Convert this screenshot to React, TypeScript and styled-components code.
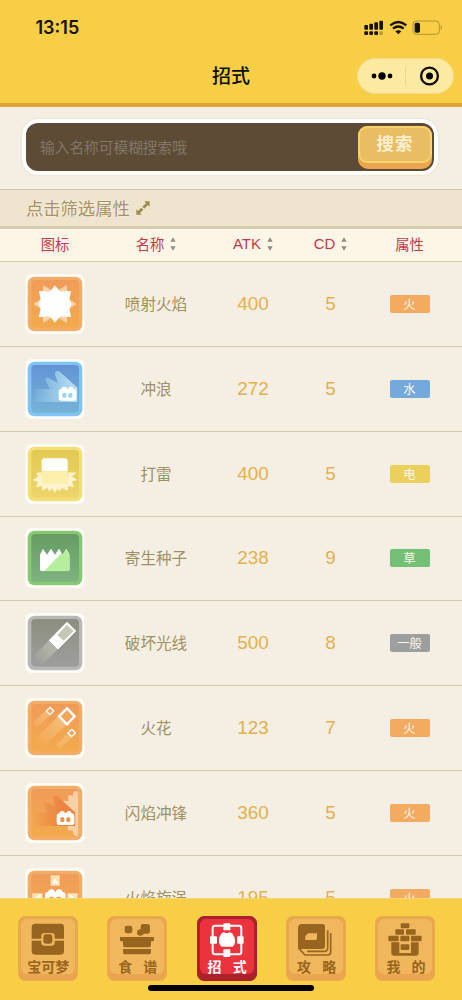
import React from "react";
import styled, { createGlobalStyle } from "styled-components";

const cjk = `"Noto Sans CJK SC", sans-serif`;

const GlobalStyle = createGlobalStyle`
  *, *::before, *::after { box-sizing: border-box; }
  body { margin: 0; background: #f4efe2; font-family: Inter, ${cjk}; }
  svg { display: block; flex: none; }
`;

const Screen = styled.div`
  position: relative;
  display: flex;
  flex-direction: column;
  width: 462px;
  height: 1000px;
  overflow: hidden;
  background: #f4efe2;
`;

const Header = styled.header`
  flex: none;
  height: 107px;
  background: #f8ce46;
  border-bottom: 4px solid #dba53b;
`;

const StatusBar = styled.div`
  display: flex;
  align-items: center;
  justify-content: space-between;
  height: 56px;
  padding: 0 19px 0 35.5px;
`;

const Clock = styled.time`
  font-size: 18px;
  font-weight: 600;
  line-height: 20px;
  color: #151204;
`;

const TitleBar = styled.div`
  display: grid;
  grid-template-columns: 1fr auto 1fr;
  align-items: center;
  height: 40px;
  padding: 0 8px;
`;

const Title = styled.h1`
  grid-column: 2;
  margin: 0;
  padding-bottom: 2px;
  font: 500 19px/28px ${cjk};
  color: #0d0b03;
`;

const Capsule = styled.div`
  justify-self: end;
  display: flex;
  align-items: center;
  width: 97px;
  height: 36px;
  border: 1px solid #f1dc8d;
  border-radius: 18px;
  background: #fceaa3;
`;

const SearchArea = styled.section`
  flex: none;
  height: 82px;
  padding: 12px 24px 0 22px;
`;

const SearchBox = styled.div`
  display: flex;
  align-items: flex-start;
  justify-content: space-between;
  height: 56px;
  padding: 3px 2px 0 14px;
  border: 4px solid #fff;
  border-radius: 16px;
  background: #5d4b35;
  box-shadow: 0 0 2px #d9d2bd;
`;

const Placeholder = styled.span`
  font: 400 14.7px/42px ${cjk};
  color: #817768;
`;

const SearchButton = styled.button`
  width: 74px;
  height: 43px;
  padding: 0;
  border: 0;
  border-bottom: 6px solid #eba650;
  border-radius: 10px;
  background: #eba650;
`;

const SearchFace = styled.span`
  display: block;
  height: 37px;
  border: 2px solid #f7d36c;
  border-radius: 9px;
  background: #e9bd61;
  font: 700 17.5px/30px ${cjk};
  letter-spacing: 1px;
  color: #fbf0d2;
`;

const FilterBar = styled.div`
  flex: none;
  display: flex;
  align-items: center;
  gap: 6px;
  height: 40px;
  padding: 0 0 1px 26px;
  border-top: 1px solid #d3c8a6;
  border-bottom: 3px solid #d6ccad;
  background: #efe4ce;
  font: 400 17.3px/28px ${cjk};
  color: #a49363;
  text-shadow: 0 0 2px #fffaf0;
`;

const columns = "110px 92px 102px 53px 105px";

const TableHead = styled.div`
  flex: none;
  display: grid;
  grid-template-columns: ${columns};
  height: 33px;
  border-bottom: 1px solid #d3caa9;
  background: #fdf6e7;
`;

const HeadCell = styled.div`
  display: flex;
  align-items: center;
  justify-content: center;
  gap: 6px;
  padding-bottom: 3px;
  font: 400 14.3px/20px ${cjk};
  color: #bd3b4c;
`;

const Latin = styled.span`
  font: 400 15px/20px "Liberation Sans", sans-serif;
`;

const List = styled.main`
  flex: 1;
  min-height: 0;
  overflow: hidden;
`;

const Row = styled.div`
  display: grid;
  grid-template-columns: ${columns};
  align-items: center;
  justify-items: center;
  height: 84.85px;
  border-bottom: 1px solid #d2caaa;
`;

const MoveName = styled.span`
  padding-bottom: 2px;
  font: 400 15.6px/22px ${cjk};
  color: #9f9163;
`;

const Value = styled.span`
  font: 400 18.9px/22px "Liberation Sans", sans-serif;
  color: #e5b04e;
`;

const Tag = styled.span<{ $color: string }>`
  width: 40px;
  height: 18px;
  border-radius: 2px;
  background: ${(p) => p.$color};
  color: #fff7e8;
  font: 400 12.3px/18px ${cjk};
  text-align: center;
`;

const Nav = styled.nav`
  flex: none;
  display: flex;
  justify-content: space-between;
  height: 102px;
  padding: 18px 26.5px 0 17.8px;
  border-top: 1px solid #f4d775;
  background: #f8ce46;
`;

const NavButton = styled.button<{ $active?: boolean }>`
  width: 60px;
  height: 65px;
  margin: -1px 0 0;
  padding: 2px 2px 7px;
  border: 1px solid ${(p) => (p.$active ? "#a91f29" : "#e7b047")};
  border-radius: 7px;
  background: ${(p) => (p.$active ? "#ab222c" : "#eba551")};
  color: ${(p) => (p.$active ? "#fff" : "#97651f")};
`;

const NavFace = styled.span<{ $active?: boolean }>`
  display: flex;
  flex-direction: column;
  align-items: center;
  height: 55px;
  padding-top: 4px;
  border-radius: 6px;
  background: ${(p) => (p.$active ? "#eb333e" : "#f1b75c")};
`;

const NavLabel = styled.span`
  padding-left: 1px;
  font: 700 14px/18px ${cjk};
  word-spacing: 8px;
  white-space: nowrap;
`;

const HomeIndicator = styled.div`
  position: absolute;
  left: 148px;
  bottom: 9px;
  width: 166px;
  height: 6px;
  border-radius: 3px;
  background: #000;
`;

const StatusIcons = () => (
  <svg width="79" height="16" viewBox="402 60 237 48">
    <g fill="#151204">
      <rect x="403" y="75" width="11" height="14" rx="3" />
      <rect x="418" y="71" width="11" height="18" rx="3" />
      <rect x="433" y="67" width="11" height="22" rx="3" />
      <rect x="448" y="62" width="11" height="27" rx="3" />
      <rect x="403" y="94" width="11" height="11" rx="3" />
      <rect x="418" y="94" width="11" height="11" rx="3" />
      <rect x="433" y="94" width="11" height="11" rx="3" />
      <rect x="448" y="94" width="11" height="11" rx="3" opacity=".25" />
    </g>
    <path d="M481 76Q505 56 529 76M489 86Q505 73 521 86" fill="none" stroke="#151204" strokeWidth="7" />
    <path d="M496 94Q505 88 514 94L505 103Z" fill="#151204" />
    <rect x="549" y="63" width="79" height="40" rx="11" fill="none" stroke="#b39435" strokeWidth="3" />
    <rect x="554" y="68" width="16" height="30" rx="5" fill="#151204" />
    <path d="M632 75Q640 83 632 91Z" fill="#b39435" />
  </svg>
);

const CapsuleIcons = () => (
  <svg width="95" height="34" viewBox="0 0 95 34">
    <circle cx="16" cy="17" r="2.4" />
    <circle cx="24" cy="17" r="3.7" />
    <circle cx="32" cy="17" r="2.4" />
    <path d="M47.5 6.5v21" stroke="#e9d997" />
    <circle cx="71.5" cy="17" r="8.4" fill="none" stroke="#0d0b03" strokeWidth="2.3" />
    <circle cx="71.5" cy="17" r="3.5" />
  </svg>
);

const ExpandIcon = () => (
  <svg width="14" height="14" viewBox="0 0 42 42" fill="#a08b4e">
    <path d="M25 1H41V17L36 12 25 23 19 17 30 6ZM17 41H1V25L6 30 16 20 22 26 12 36Z" />
  </svg>
);

const SortIcon = () => (
  <svg width="6" height="14" viewBox="0 0 18 42" fill="#8f8c87">
    <path d="M9 1L17 14H1ZM9 41L1 28H17Z" />
  </svg>
);

const themes = {
  fire: { edge: "#f2ae68", top: "#f09c59", bottom: "#f2aa4c", tag: "#f2ab61", label: "火" },
  water: { edge: "#80c4f2", top: "#6393d5", bottom: "#76b3d6", tag: "#74aadb", label: "水" },
  electric: { edge: "#f4de76", top: "#e3c953", bottom: "#edd46b", tag: "#ebd05c", label: "电" },
  grass: { edge: "#87c873", top: "#679b63", bottom: "#7eb381", tag: "#73bf75", label: "草" },
  normal: { edge: "#b7b8b7", top: "#8c8e7e", bottom: "#9e9f9e", tag: "#9d9f9f", label: "一般" },
};
type Kind = keyof typeof themes;

const Critter = ({ x, y, eye }: { x: number; y: number; eye: string }) => (
  <g transform={`translate(${x} ${y})`}>
    <path d="M0 15Q0 7 8 7Q9 0 16 0Q24 0 25 6H28Q29 0 37 0Q44 0 45 7Q53 7 53 15V35Q53 42 45 42H8Q0 42 0 35Z" fill="#fff" />
    <rect x="11" y="19" width="12" height="14" rx="4" fill={eye} />
    <rect x="29" y="19" width="12" height="14" rx="4" fill={eye} />
  </g>
);

const FlameBurst = () => (
  <>
    <path d="M27 90L51 74 56 35 74 46 90 60 106 46 124 35 129 74 153 90 129 106 124 145 106 134 90 120 74 134 56 145 51 106Z" fill="#f9d3ab" stroke="#f9d3ab" strokeWidth="2" strokeLinejoin="round" />
    <path d="M90 37L105 55 136 53 131 75 137 90 131 105 136 127 105 125 90 143 75 125 44 127 49 105 43 90 49 75 44 53 75 55Z" fill="#fff" stroke="#fff" strokeWidth="4" strokeLinejoin="round" />
  </>
);

const Surf = () => (
  <>
    <defs>
      <linearGradient id="surf" x1="24" x2="155" y1="0" y2="0" gradientUnits="userSpaceOnUse">
        <stop stopColor="#a9daf0" stopOpacity="0" />
        <stop offset=".5" stopColor="#9dccea" stopOpacity=".85" />
        <stop offset="1" stopColor="#b9e2f4" />
      </linearGradient>
    </defs>
    <path d="M24 90H74L62 63Q60 54 69 56L98 72 90 46Q90 32 103 37L157 86V129H24Z" fill="url(#surf)" />
    <Critter x={101} y={83} eye="#9ed5f0" />
  </>
);

const Thunder = () => (
  <>
    <path d="M35 87L50 86V98H130V86L153 87L139 97L155 108L139 112L146 128L128 125L127 139L111 131L102 141L96 132L90 145L82 132L73 141L67 130L53 139L51 125L34 128L40 114L25 108L40 98Z" fill="#fff4cf" stroke="#fff4cf" strokeWidth="2" strokeLinejoin="round" />
    <path d="M50 82H128V120H50Z" fill="#fbefab" />
    <path d="M50 82V52Q50 43 59 43H119Q128 43 128 52V82Z" fill="#fff" />
  </>
);

const LeechSeed = () => (
  <>
    <defs>
      <clipPath id="seed">
        <path d="M45 80L54 62 66 80 78 62 90 80 102 62 113 80 124 62 134 80V122Q134 130 126 130H53Q45 130 45 122Z" />
      </clipPath>
    </defs>
    <g clipPath="url(#seed)">
      <path d="M40 55H140V135H40Z" fill="#fff" />
      <path d="M52 135L116 69V55H140V135Z" fill="#b5ee9d" />
    </g>
  </>
);

const HyperBeam = () => (
  <>
    <defs>
      <linearGradient id="beam" x1="30" x2="88" y1="142" y2="82" gradientUnits="userSpaceOnUse">
        <stop stopColor="#c8cabd" stopOpacity="0" />
        <stop offset="1" stopColor="#b7b9a8" />
      </linearGradient>
    </defs>
    <path d="M20 134L73 82 99 108 48 158Z" fill="url(#beam)" />
    <path d="M73 82L126 28 152 54 99 108Z" fill="#fff" stroke="#fff" strokeWidth="3" strokeLinejoin="round" />
    <path d="M97 66L126 35 146 54 116 83Z" fill="#c6c8b6" />
  </>
);

const Ember = () => (
  <>
    <defs>
      <linearGradient id="ember" x1="30" x2="120" y1="140" y2="60" gradientUnits="userSpaceOnUse">
        <stop stopColor="#f7c274" stopOpacity="0" />
        <stop offset="1" stopColor="#f7be7e" />
      </linearGradient>
    </defs>
    <path d="M22 130L101 54 126 79 46 154ZM24 73L64 37 76 51 36 88ZM92 141L128 105 141 118 103 154Z" fill="url(#ember)" />
    <g fill="#f3a65b" stroke="#fff">
      <path d="M126 31L149 55 126 79 102 55Z" strokeWidth="7" />
      <path d="M75 28L86 39 75 50 64 39ZM140 94L151 105 140 116 129 105Z" strokeWidth="4" />
    </g>
  </>
);

const FlareBlitz = () => (
  <>
    <defs>
      <linearGradient id="blitz" x1="26" x2="105" y1="0" y2="0" gradientUnits="userSpaceOnUse">
        <stop stopColor="#ef8540" stopOpacity="0" />
        <stop offset="1" stopColor="#ed8540" />
      </linearGradient>
    </defs>
    <path d="M160 27L153 23 145 28 143 40 133 35 129 42 131 54 114 53 124 69 151 90V129H128L129 142 143 143 147 157 155 160 160 153Z" fill="#f8d0a4" />
    <path d="M24 89H66L56 64Q54 54 64 57L91 72 84 48Q84 33 97 39L150 88V129H24Z" fill="url(#blitz)" />
    <Critter x={95} y={84} eye="#f09245" />
  </>
);

const FireSpin = () => (
  <>
    <path d="M77 22H104V53H77ZM22 76H53V102H22ZM127 76H158V102H127Z" fill="#fbe1b4" />
    <path d="M90 31L100 47H80ZM30 90L47 77V102ZM150 90L133 77V102Z" fill="#fff" />
    <g transform="translate(-15 -26) scale(1.17)">
      <Critter x={64} y={77} eye="#f09b4b" />
    </g>
  </>
);

const MoveIcon = ({ kind, art }: { kind: Kind; art: React.ReactNode }) => {
  const t = themes[kind];
  return (
    <svg width="60" height="60" viewBox="0 0 180 180">
      <defs>
        <linearGradient id={`panel-${kind}`} x1="0" y1="0" x2="0" y2="1">
          <stop stopColor={t.top} />
          <stop offset="1" stopColor={t.bottom} />
        </linearGradient>
      </defs>
      <rect x="1.5" y="1" width="177" height="178" rx="17" fill="#fffefa" />
      <rect x="8" y="8" width="164" height="164" rx="21" fill={t.edge} />
      <rect x="19" y="18" width="143" height="143" rx="12" fill={`url(#panel-${kind})`} />
      {art}
    </svg>
  );
};

const BoxIcon = () => (
  <>
    <path d="M43 67V33Q43 22 54 22H130Q140 22 140 33V67H112V59Q112 50 103 50H81Q72 50 72 59V67ZM43 73H72V79Q72 88 81 88H103Q112 88 112 79V73H140V105Q140 115 130 115H54Q43 115 43 105Z" />
    <rect x="78" y="54" width="27" height="28" rx="7" />
  </>
);

const PotIcon = () => (
  <>
    <rect x="55" y="28" width="23" height="23" rx="7" />
    <path d="M103 31Q103 23 111 23H123Q131 23 131 31V44Q131 52 123 52H112Q110 58 102 58Q92 58 92 49Q92 39 103 39Z" />
    <path d="M41 62H143V72Q143 75 139 75H134V86Q134 93 127 93H58Q50 93 50 86V75H45Q41 75 41 71ZM50 98H134V109Q134 114 128 114H56Q50 114 50 109Z" />
  </>
);

const MovesIcon = () => (
  <>
    <rect x="49" y="28" width="86" height="86" rx="7" fill="none" stroke="#fff" strokeWidth="6" />
    <path d="M85 21H99Q102 21 102 24V40Q102 42 99 42H84Q81 42 81 40V24Q81 21 85 21ZM84 99H99Q102 99 102 102V119Q102 122 99 122H84Q81 122 81 119V102Q81 99 84 99ZM44 60H59Q62 60 62 63V79Q62 82 59 82H44Q41 82 41 79V63Q41 60 44 60ZM125 60H139Q142 60 142 63V79Q142 82 139 82H125Q122 82 122 79V63Q122 60 125 60Z" />
    <path d="M69 62Q73 58 74 53Q81 44 88 50H95Q103 44 109 53Q110 58 114 62Q120 82 109 91H76Q64 82 69 62Z" />
  </>
);

const BooksIcon = () => (
  <>
    <path fillRule="evenodd" d="M50 23H111Q119 23 119 31V90Q119 98 111 98H38V35Q38 23 50 23ZM69 51L60 59V71H90Q95 71 95 66V51Z" />
    <path d="M41 97L59 116H128Q136 116 136 108V50M65 105H118Q127 105 127 96V42" fill="none" stroke="currentColor" strokeWidth="5" />
  </>
);

const HouseIcon = () => (
  <>
    <rect x="79" y="21" width="26" height="15" rx="3" />
    <rect x="63" y="39" width="26" height="16" rx="3" />
    <rect x="95" y="39" width="29" height="16" rx="3" />
    <rect x="42" y="58" width="31" height="17" rx="3" />
    <rect x="78" y="58" width="27" height="17" rx="3" />
    <rect x="110" y="58" width="32" height="17" rx="3" />
    <path fillRule="evenodd" d="M51 78H133V111Q133 118 126 118H58Q51 118 51 111ZM75 78V110H110V78Z" />
    <rect x="79" y="84" width="26" height="17" rx="3" />
  </>
);

const moves: { name: string; atk: number; cd: number; kind: Kind; art: React.ReactNode }[] = [
  { name: "喷射火焰", atk: 400, cd: 5, kind: "fire", art: <FlameBurst /> },
  { name: "冲浪", atk: 272, cd: 5, kind: "water", art: <Surf /> },
  { name: "打雷", atk: 400, cd: 5, kind: "electric", art: <Thunder /> },
  { name: "寄生种子", atk: 238, cd: 9, kind: "grass", art: <LeechSeed /> },
  { name: "破坏光线", atk: 500, cd: 8, kind: "normal", art: <HyperBeam /> },
  { name: "火花", atk: 123, cd: 7, kind: "fire", art: <Ember /> },
  { name: "闪焰冲锋", atk: 360, cd: 5, kind: "fire", art: <FlareBlitz /> },
  { name: "火焰旋涡", atk: 195, cd: 5, kind: "fire", art: <FireSpin /> },
];

const heads = [
  { label: "图标" },
  { label: "名称", sort: true },
  { label: "ATK", sort: true, latin: true },
  { label: "CD", sort: true, latin: true },
  { label: "属性" },
];

const tabs = [
  { label: "宝可梦", icon: <BoxIcon /> },
  { label: "食 谱", icon: <PotIcon /> },
  { label: "招 式", icon: <MovesIcon />, active: true },
  { label: "攻 略", icon: <BooksIcon /> },
  { label: "我 的", icon: <HouseIcon /> },
];

export default function App() {
  return (
    <Screen>
      <GlobalStyle />
      <Header>
        <StatusBar>
          <Clock>13:15</Clock>
          <StatusIcons />
        </StatusBar>
        <TitleBar>
          <Title>招式</Title>
          <Capsule>
            <CapsuleIcons />
          </Capsule>
        </TitleBar>
      </Header>
      <SearchArea>
        <SearchBox>
          <Placeholder>输入名称可模糊搜索哦</Placeholder>
          <SearchButton>
            <SearchFace>搜索</SearchFace>
          </SearchButton>
        </SearchBox>
      </SearchArea>
      <FilterBar>
        点击筛选属性
        <ExpandIcon />
      </FilterBar>
      <TableHead>
        {heads.map((h) => (
          <HeadCell key={h.label}>
            {h.latin ? <Latin>{h.label}</Latin> : h.label}
            {h.sort && <SortIcon />}
          </HeadCell>
        ))}
      </TableHead>
      <List>
        {moves.map((m) => (
          <Row key={m.name}>
            <MoveIcon kind={m.kind} art={m.art} />
            <MoveName>{m.name}</MoveName>
            <Value>{m.atk}</Value>
            <Value>{m.cd}</Value>
            <Tag $color={themes[m.kind].tag}>{themes[m.kind].label}</Tag>
          </Row>
        ))}
      </List>
      <Nav>
        {tabs.map((t) => (
          <NavButton key={t.label} $active={t.active}>
            <NavFace $active={t.active}>
              <svg width="36" height="34" viewBox="38 20 108 102" fill="currentColor">
                {t.icon}
              </svg>
              <NavLabel>{t.label}</NavLabel>
            </NavFace>
          </NavButton>
        ))}
      </Nav>
      <HomeIndicator />
    </Screen>
  );
}
